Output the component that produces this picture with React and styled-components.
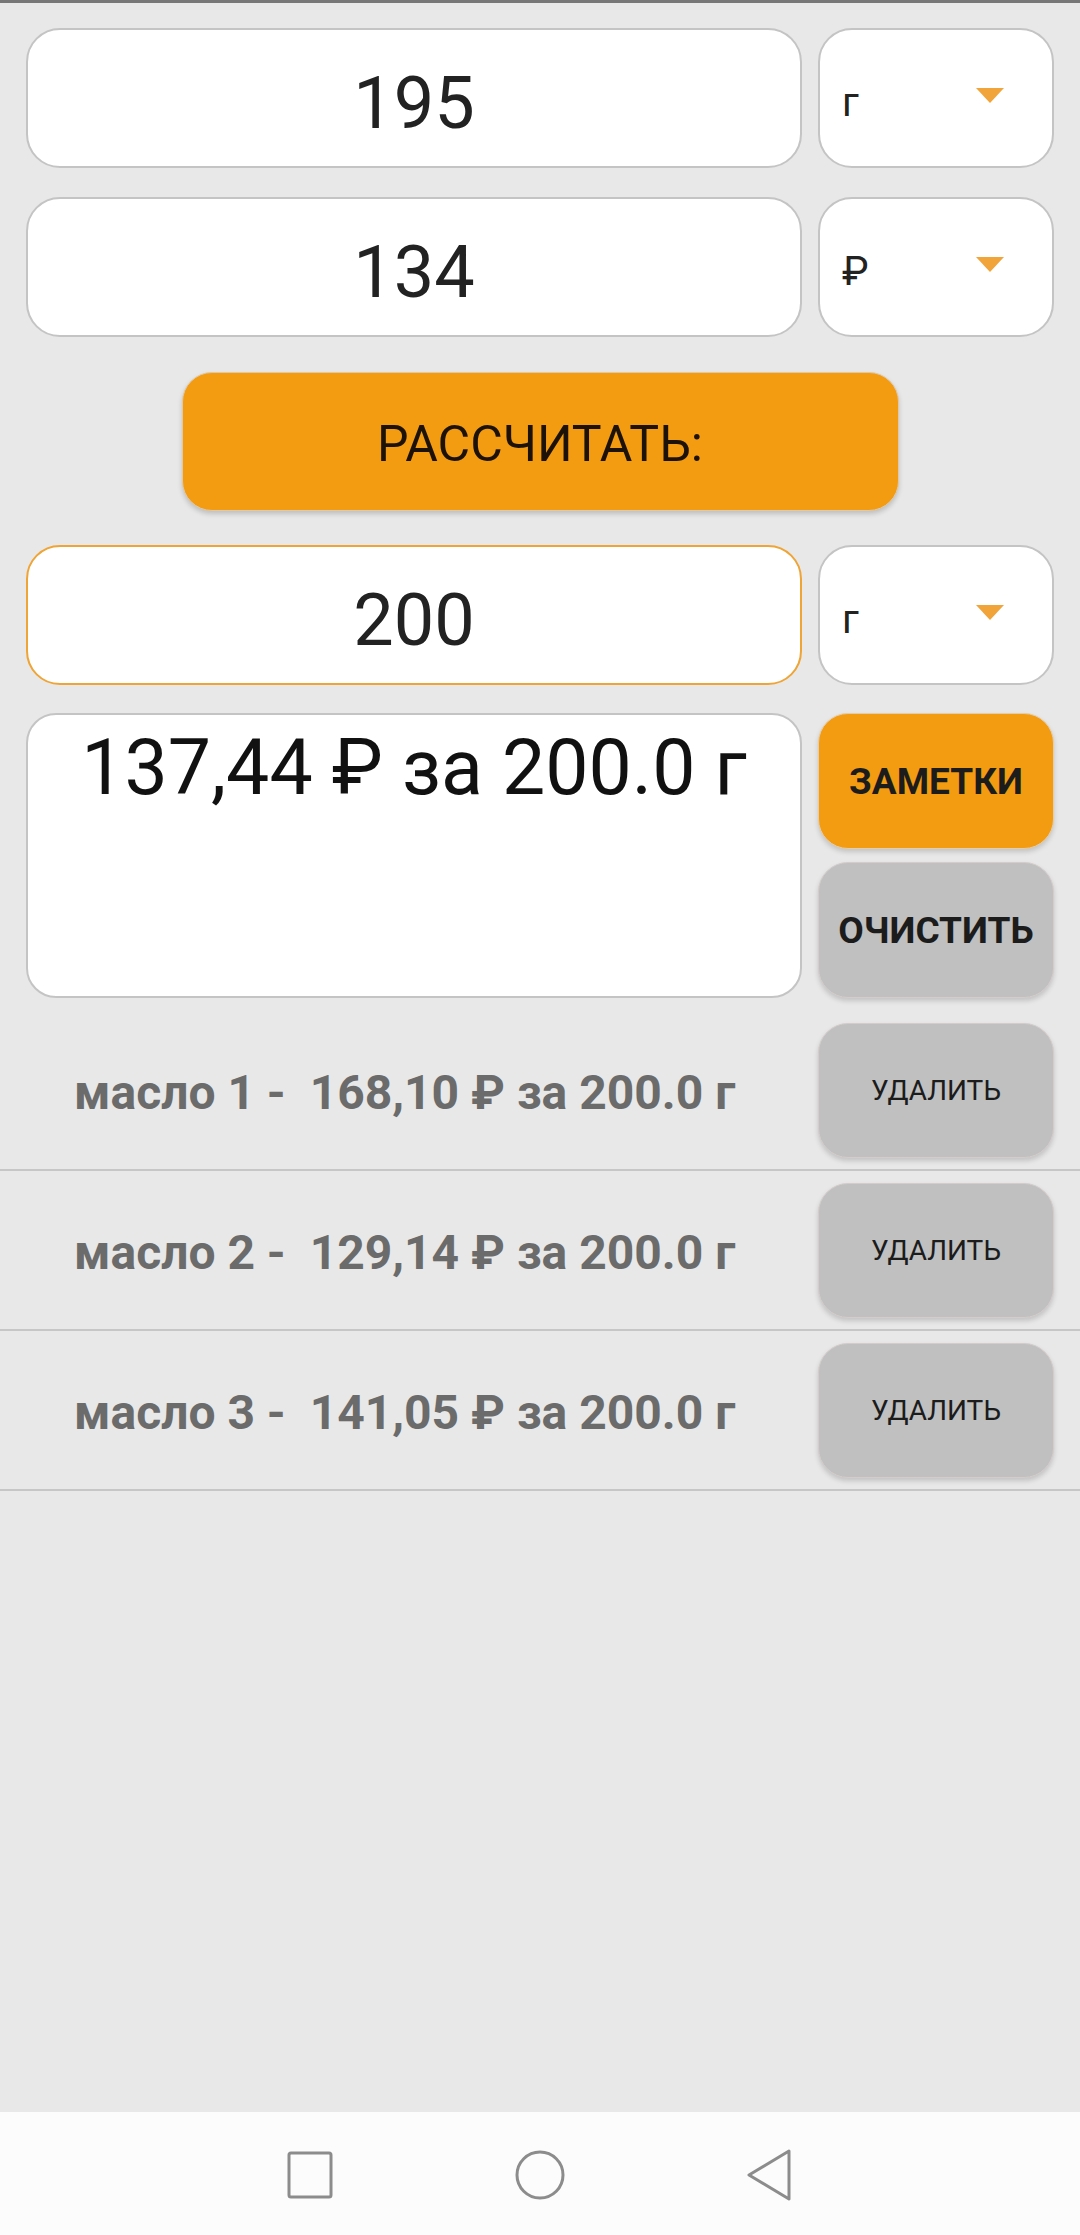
import React from 'react';
import styled, { createGlobalStyle } from 'styled-components';

const GlobalStyle = createGlobalStyle`
  html, body {
    margin: 0;
    padding: 0;
    background: #e8e8e8;
    font-family: Roboto, "Noto Sans", Arial, sans-serif;
  }
  * { box-sizing: border-box; }
`;

const fields = [
  { value: '195', unit: 'г' },
  { value: '134', unit: '₽' },
];

const notes = [
  'масло 1 -  168,10 ₽ за 200.0 г',
  'масло 2 -  129,14 ₽ за 200.0 г',
  'масло 3 -  141,05 ₽ за 200.0 г',
];

const App = () => {
  return (
    <Page>
      <GlobalStyle />
      <TopLine />
      <Main>
        {fields.map((f) => (
          <FieldRow key={f.value}>
            <NumberInput readOnly value={f.value} />
            <UnitSelect unit={f.unit} />
          </FieldRow>
        ))}

        <CalcRow>
          <CalcButton>РАССЧИТАТЬ:</CalcButton>
        </CalcRow>

        <FieldRow>
          <NumberInput readOnly value="200" $focused />
          <UnitSelect unit="г" />
        </FieldRow>

        <ResultRow>
          <ResultBox>137,44 ₽ за 200.0 г</ResultBox>
          <SideButtons>
            <ActionButton $primary>ЗАМЕТКИ</ActionButton>
            <ActionButton>ОЧИСТИТЬ</ActionButton>
          </SideButtons>
        </ResultRow>
      </Main>

      <NoteList>
        {notes.map((n) => (
          <NoteRow key={n}>
            <NoteText>{n}</NoteText>
            <DeleteButton>УДАЛИТЬ</DeleteButton>
          </NoteRow>
        ))}
      </NoteList>

      <Filler />

      <NavBar>
        <NavSlot>
          <svg width="50" height="50" viewBox="0 0 50 50">
            <rect x="4" y="3" width="42" height="44" rx="2" fill="none" stroke="#8c8c8c" strokeWidth="3" />
          </svg>
        </NavSlot>
        <NavSlot>
          <svg width="54" height="54" viewBox="0 0 54 54">
            <circle cx="27" cy="27" r="23" fill="none" stroke="#8c8c8c" strokeWidth="3" />
          </svg>
        </NavSlot>
        <NavSlot>
          <svg width="50" height="54" viewBox="0 0 50 54">
            <path d="M44 3 L4 27 L44 51 Z" fill="none" stroke="#8c8c8c" strokeWidth="3" strokeLinejoin="round" />
          </svg>
        </NavSlot>
      </NavBar>
    </Page>
  );
};

const UnitSelect = ({ unit }) => (
  <SelectBox>
    <span>{unit}</span>
    <Caret />
  </SelectBox>
);

// Styled components
const Page = styled.div`
  min-height: 2235px;
  display: flex;
  flex-direction: column;
`;

const TopLine = styled.div`
  height: 3px;
  background: #777;
`;

const Main = styled.div`
  padding: 25px 26px 0;
  display: flex;
  flex-direction: column;
  gap: 29px;
`;

const FieldRow = styled.div`
  display: grid;
  grid-template-columns: 1fr 236px;
  gap: 16px;
  height: 140px;
`;

const NumberInput = styled.input`
  width: 100%;
  height: 100%;
  border: 2px solid ${(p) => (p.$focused ? '#efa436' : '#c4c4c4')};
  border-radius: 34px;
  background: #fff;
  text-align: center;
  font-family: Roboto, sans-serif;
  font-size: 72px;
  color: #222;
  padding: 10px 0 0;
  outline: none;
`;

const SelectBox = styled.div`
  display: flex;
  align-items: center;
  justify-content: space-between;
  height: 100%;
  border: 2px solid #c4c4c4;
  border-radius: 34px;
  background: #fff;
  padding: 8px 48px 0 22px;
  font-size: 40px;
  color: #222;
`;

const Caret = styled.div`
  width: 0;
  height: 0;
  margin-top: -14px;
  border-left: 14px solid transparent;
  border-right: 14px solid transparent;
  border-top: 15px solid #f0a43a;
`;

const CalcRow = styled.div`
  display: flex;
  justify-content: center;
  margin: 6px 0 5px;
`;

const CalcButton = styled.button`
  width: 717px;
  height: 139px;
  border: 1px solid #e0c9a6;
  border-radius: 30px;
  background: #f39c12;
  box-shadow: 0 3px 5px rgba(0, 0, 0, 0.18);
  font-family: Roboto, sans-serif;
  font-size: 50px;
  color: #1c1208;
  padding-top: 6px;
`;

const ResultRow = styled.div`
  display: grid;
  grid-template-columns: 1fr 236px;
  gap: 16px;
  height: 285px;
  margin-top: -1px;
`;

const ResultBox = styled.div`
  border: 2px solid #c4c4c4;
  border-radius: 30px;
  background: #fff;
  text-align: center;
  padding-top: 8px;
  font-size: 77px;
  color: #111;
  white-space: nowrap;
`;

const SideButtons = styled.div`
  display: flex;
  flex-direction: column;
  gap: 13px;
`;

const ActionButton = styled.button`
  flex: 1;
  border: 1px solid ${(p) => (p.$primary ? '#e6cda8' : '#d4cccc')};
  border-radius: 30px;
  background: ${(p) => (p.$primary ? '#f39c12' : '#c0c0c0')};
  box-shadow: 0 3px 5px rgba(0, 0, 0, 0.16);
  font-family: Roboto, sans-serif;
  font-weight: 700;
  font-size: 37px;
  color: #1c1c1c;
  padding: 0;
`;

const NoteList = styled.div`
  margin-top: 13px;
`;

const NoteRow = styled.div`
  display: flex;
  align-items: center;
  padding: 12px 26px 11px 74px;
  border-bottom: 2px solid #c6c6c6;
`;

const NoteText = styled.div`
  flex: 1;
  white-space: pre;
  font-size: 48px;
  font-weight: 700;
  color: #6b6b6b;
  padding-top: 4px;
`;

const DeleteButton = styled.button`
  width: 236px;
  height: 135px;
  border: 1px solid #d4cccc;
  border-radius: 30px;
  background: #c0c0c0;
  box-shadow: 0 3px 5px rgba(0, 0, 0, 0.16);
  font-family: Roboto, sans-serif;
  font-size: 28px;
  color: #1c1c1c;
  padding: 0;
`;

const Filler = styled.div`
  flex: 1;
`;

const NavBar = styled.div`
  height: 123px;
  background: #fcfcfc;
  display: flex;
  justify-content: center;
  align-items: center;
  padding-top: 2px;
`;

const NavSlot = styled.div`
  width: 230px;
  display: flex;
  justify-content: center;
  align-items: center;
`;

export default App;
